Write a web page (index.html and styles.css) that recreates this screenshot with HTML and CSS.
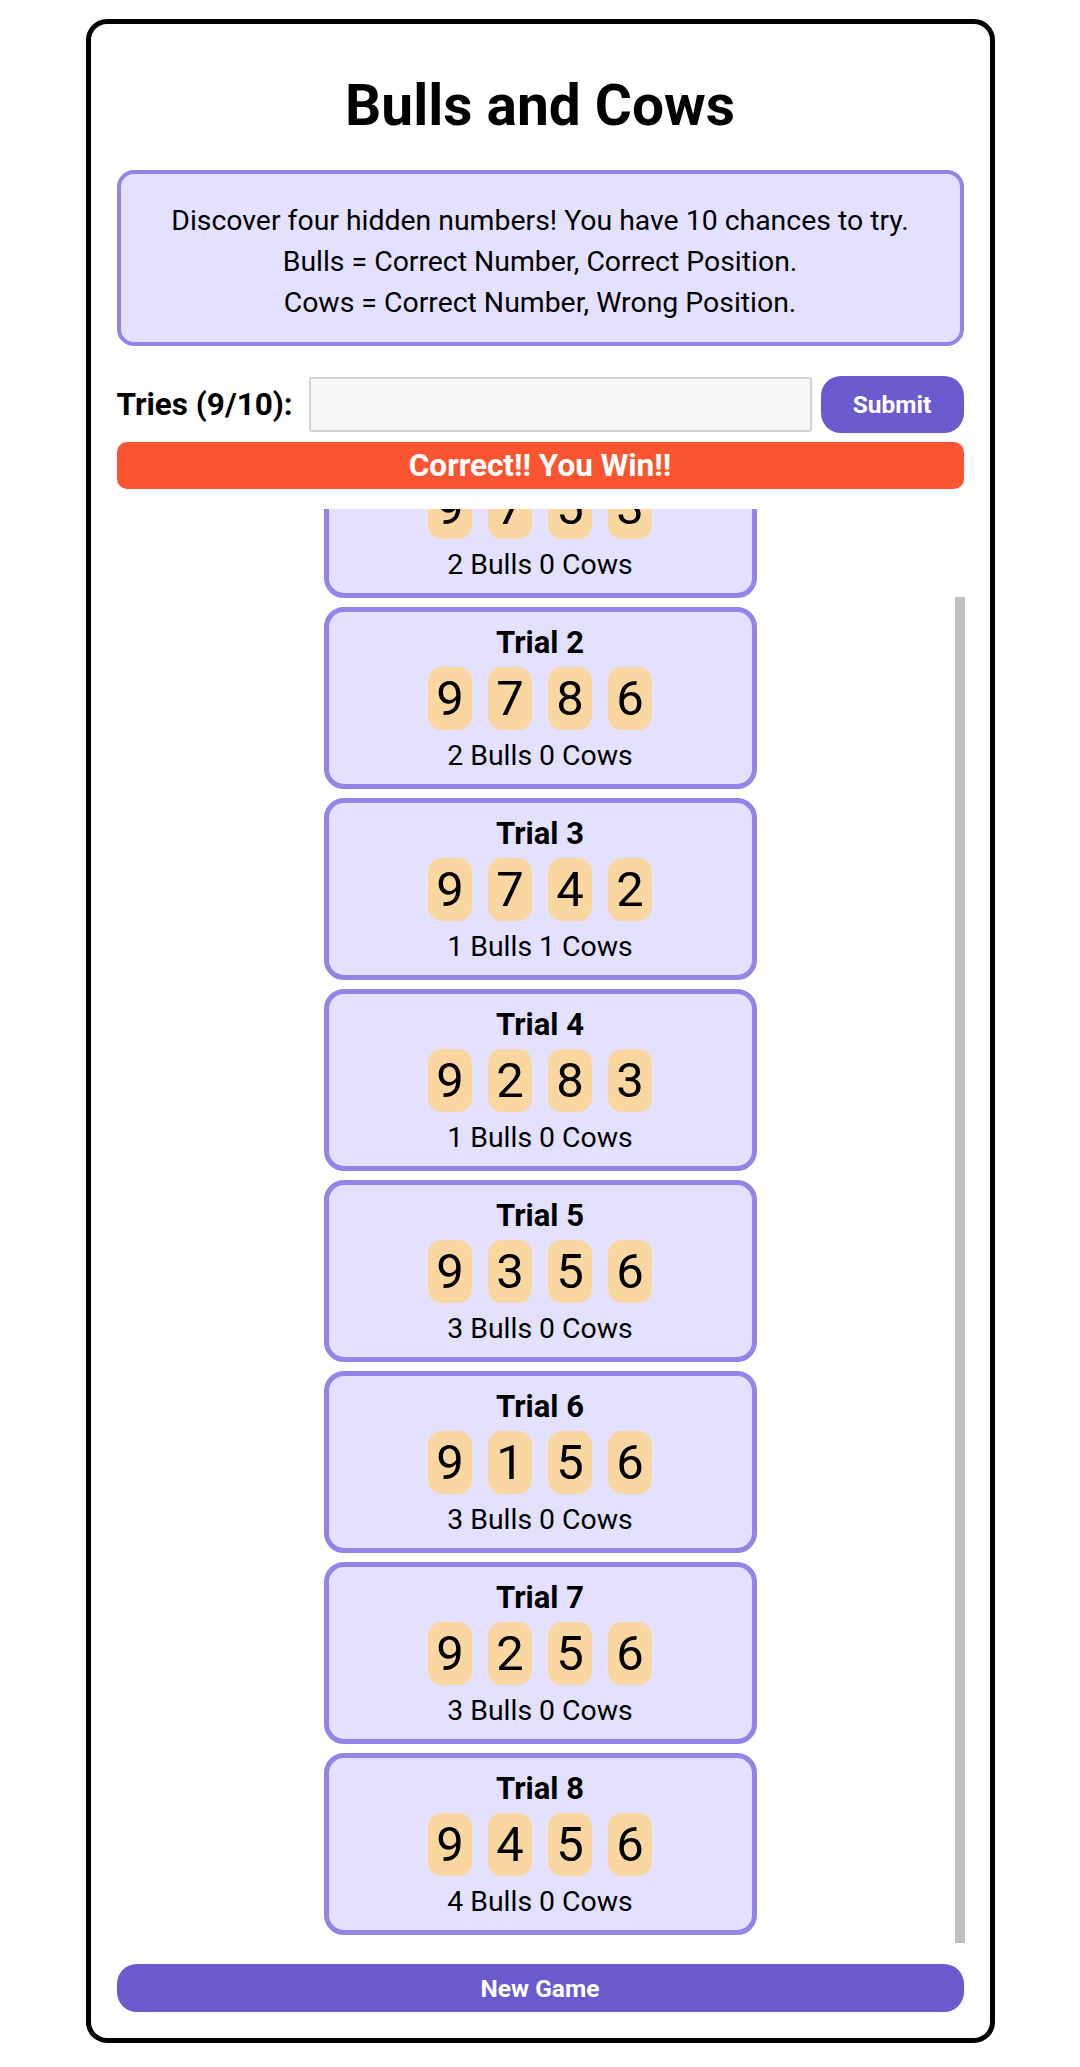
FILE: index.html
```html
<!DOCTYPE html>
<html lang="en">
<head>
<meta charset="utf-8">
<title>Bulls and Cows</title>
<link rel="stylesheet" href="styles.css">
</head>
<body>
<main class="game">
  <h1 class="title">Bulls and Cows</h1>
  <section class="rules">
    <p>Discover four hidden numbers! You have 10 chances to try.</p>
    <p>Bulls = Correct Number, Correct Position.</p>
    <p>Cows = Correct Number, Wrong Position.</p>
  </section>
  <form class="guess-row">
    <label class="tries" for="guess">Tries (9/10):</label>
    <input class="guess-input" id="guess" type="text">
    <button class="submit-btn" type="button">Submit</button>
  </form>
  <div class="banner">Correct!! You Win!!</div>
  <div class="trials-wrap">
    <div class="trials" id="trials">
      <div class="trial"><div class="trial-title">Trial 1</div><div class="digits"><span class="digit">9</span><span class="digit">7</span><span class="digit">5</span><span class="digit">3</span></div><div class="result">2 Bulls 0 Cows</div></div>
      <div class="trial"><div class="trial-title">Trial 2</div><div class="digits"><span class="digit">9</span><span class="digit">7</span><span class="digit">8</span><span class="digit">6</span></div><div class="result">2 Bulls 0 Cows</div></div>
      <div class="trial"><div class="trial-title">Trial 3</div><div class="digits"><span class="digit">9</span><span class="digit">7</span><span class="digit">4</span><span class="digit">2</span></div><div class="result">1 Bulls 1 Cows</div></div>
      <div class="trial"><div class="trial-title">Trial 4</div><div class="digits"><span class="digit">9</span><span class="digit">2</span><span class="digit">8</span><span class="digit">3</span></div><div class="result">1 Bulls 0 Cows</div></div>
      <div class="trial"><div class="trial-title">Trial 5</div><div class="digits"><span class="digit">9</span><span class="digit">3</span><span class="digit">5</span><span class="digit">6</span></div><div class="result">3 Bulls 0 Cows</div></div>
      <div class="trial"><div class="trial-title">Trial 6</div><div class="digits"><span class="digit">9</span><span class="digit">1</span><span class="digit">5</span><span class="digit">6</span></div><div class="result">3 Bulls 0 Cows</div></div>
      <div class="trial"><div class="trial-title">Trial 7</div><div class="digits"><span class="digit">9</span><span class="digit">2</span><span class="digit">5</span><span class="digit">6</span></div><div class="result">3 Bulls 0 Cows</div></div>
      <div class="trial"><div class="trial-title">Trial 8</div><div class="digits"><span class="digit">9</span><span class="digit">4</span><span class="digit">5</span><span class="digit">6</span></div><div class="result">4 Bulls 0 Cows</div></div>
    </div>
    <div class="scroll-thumb"></div>
  </div>
  <button class="new-game" type="button">New Game</button>
</main>
<script src="script.js"></script>
</body>
</html>
```

FILE: styles.css
```css
* { box-sizing: border-box; }

html, body {
  margin: 0;
  padding: 0;
  background: #ffffff;
}

body {
  font-family: Roboto, "Liberation Sans", Arial, sans-serif;
  color: #000000;
  font-size: 28px;
}

.game {
  width: 909px;
  margin: 19px auto 0;
  border: 5px solid #000000;
  border-radius: 21px;
  padding: 26px 26px 26px;
  display: flex;
  flex-direction: column;
}

.title {
  margin: 23px 0 31px;
  font-size: 56.8px;
  line-height: 66px;
  font-weight: 700;
  text-align: center;
}

.rules {
  background: #e4e0ff;
  border: 4.5px solid #9385e8;
  border-radius: 17px;
  padding: 26px 10px 19px;
  text-align: center;
}

.rules p {
  margin: 0;
  font-size: 28.4px;
  line-height: 41px;
}

.guess-row {
  margin: 30px 0 0;
  display: flex;
  align-items: center;
}

.tries {
  font-size: 31.5px;
  font-weight: 700;
  margin-right: 16px;
  white-space: nowrap;
}

.guess-input {
  flex: 1;
  min-width: 0;
  height: 55px;
  border: 2.5px solid #d3d3d3;
  border-radius: 3px;
  background: #f7f7f7;
  font-family: inherit;
  font-size: 28px;
  padding: 0 10px;
}

.submit-btn {
  margin-left: 9px;
  width: 143px;
  height: 57px;
  border: none;
  border-radius: 20px;
  background: #6a5acd;
  color: #ffffff;
  font-family: inherit;
  font-size: 24.5px;
  font-weight: 700;
}

.banner {
  margin-top: 9px;
  height: 47px;
  border-radius: 10px;
  background: #fa5530;
  color: #ffffff;
  font-size: 31.5px;
  font-weight: 700;
  display: flex;
  align-items: center;
  justify-content: center;
}

.trials-wrap {
  position: relative;
  margin-top: 20px;
}

.trials {
  height: 1435px;
  overflow: hidden;
  display: flex;
  flex-direction: column;
  align-items: center;
}

.scroll-thumb {
  position: absolute;
  right: -1px;
  top: 88px;
  bottom: 1px;
  width: 10px;
  background: #c0c0c0;
}

.trial {
  flex: none;
  width: 433px;
  height: 182px;
  margin: 0 0 9px;
  background: #e4e0ff;
  border: 5px solid #9385e8;
  border-radius: 20px;
  padding: 13px 0 0;
  display: flex;
  flex-direction: column;
  align-items: center;
}

.trial-title {
  font-size: 31px;
  font-weight: 700;
  line-height: 36px;
}

.digits {
  margin-top: 6px;
  display: flex;
  gap: 16px;
}

.digit {
  width: 44px;
  height: 63px;
  border-radius: 14px;
  background: #fad7a0;
  font-size: 49px;
  display: flex;
  align-items: center;
  justify-content: center;
}

.result {
  margin-top: 9px;
  font-size: 28.4px;
  line-height: 33px;
}

.new-game {
  margin-top: 20px;
  height: 48px;
  border: none;
  border-radius: 20px;
  background: #6a5acd;
  color: #ffffff;
  font-family: inherit;
  font-size: 24.5px;
  font-weight: 700;
}
```

FILE: script.js
```js
var list = document.getElementById('trials');
list.scrollTop = list.scrollHeight;
```
